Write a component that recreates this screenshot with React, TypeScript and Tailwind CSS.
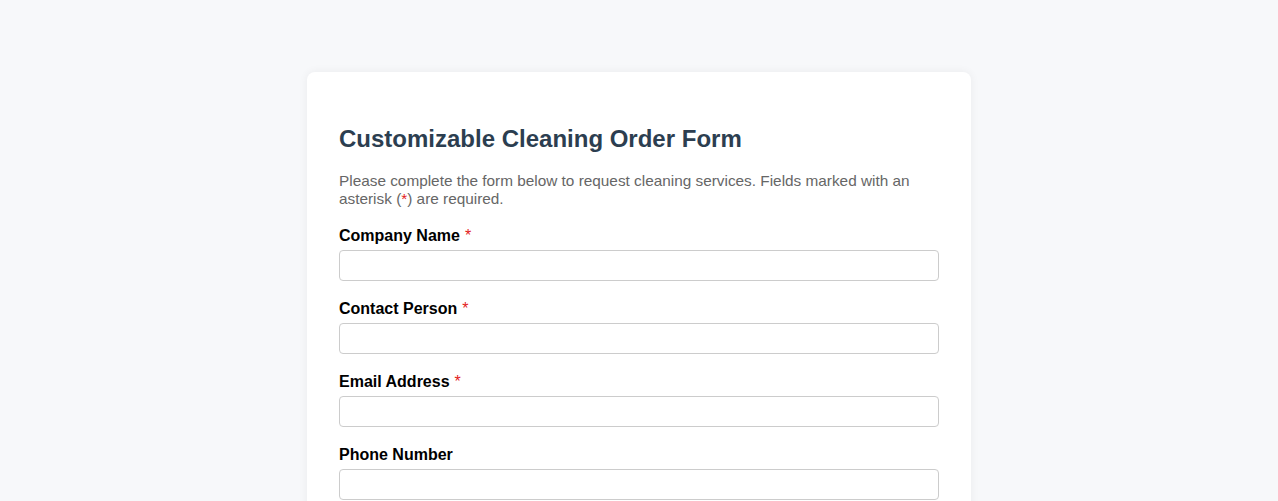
import React from "react";

const fields = [
  { label: "Company Name", required: true },
  { label: "Contact Person", required: true },
  { label: "Email Address", required: true },
  { label: "Phone Number", required: false },
];

export default function App() {
  return (
    <div className="min-h-screen bg-[#f7f8fa] pt-[72px] font-['Liberation_Sans',Arial,sans-serif]">
      <div className="mx-auto w-[664px] rounded-lg bg-white px-8 pt-[52px] pb-8 shadow-[0_0_10px_rgba(0,0,0,0.06)]">
        <h1 className="text-[24px] leading-[29px] font-bold text-[#2c3e50]">
          Customizable Cleaning Order Form
        </h1>
        <p className="mt-[19px] text-[15.35px] leading-[18px] text-[#666]">
          Please complete the form below to request cleaning services. Fields marked with an asterisk (
          <span className="text-[#e31b1b]">*</span>) are required.
        </p>
        <div className="mt-[18px] flex flex-col gap-[18px]">
          {fields.map((f) => (
            <div key={f.label} className="flex flex-col">
              <label className="text-[16px] leading-[19px] font-bold text-black">
                {f.label}
                {f.required && <span className="ml-[5px] font-normal text-[#e31b1b]">*</span>}
              </label>
              <input
                type="text"
                className="mt-[5px] h-[31px] w-full rounded-[4px] border border-[#ccc] bg-white px-2 text-[16px]"
              />
            </div>
          ))}
        </div>
      </div>
    </div>
  );
}
